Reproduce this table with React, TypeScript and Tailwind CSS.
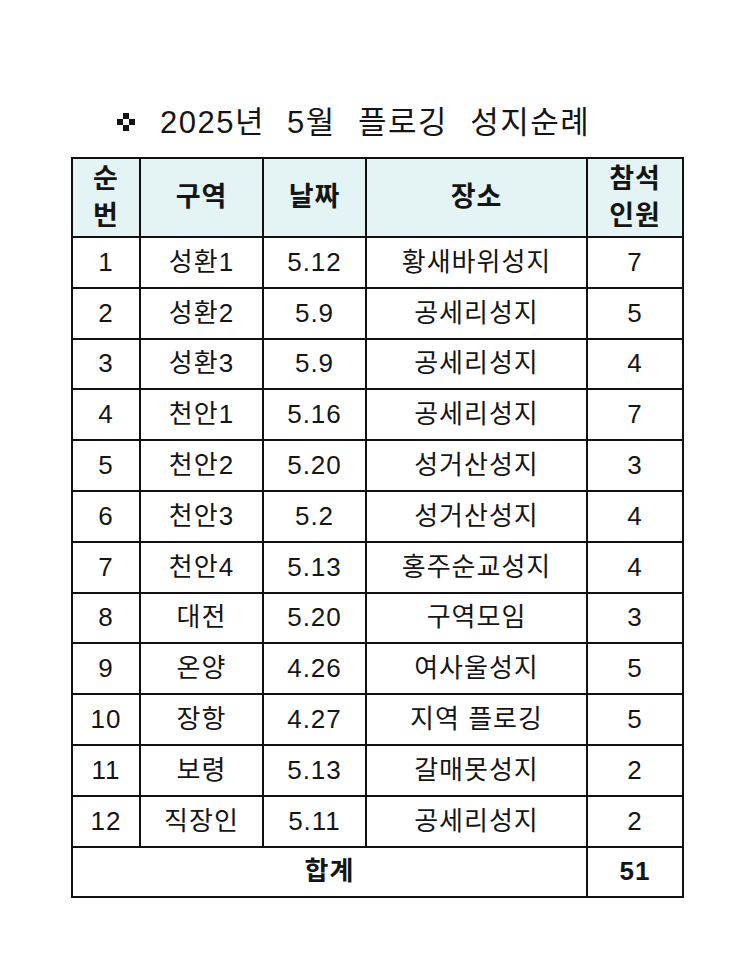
import React from "react";

const rows = [
  ["1", "성환1", "5.12", "황새바위성지", "7"],
  ["2", "성환2", "5.9", "공세리성지", "5"],
  ["3", "성환3", "5.9", "공세리성지", "4"],
  ["4", "천안1", "5.16", "공세리성지", "7"],
  ["5", "천안2", "5.20", "성거산성지", "3"],
  ["6", "천안3", "5.2", "성거산성지", "4"],
  ["7", "천안4", "5.13", "홍주순교성지", "4"],
  ["8", "대전", "5.20", "구역모임", "3"],
  ["9", "온양", "4.26", "여사울성지", "5"],
  ["10", "장항", "4.27", "지역 플로깅", "5"],
  ["11", "보령", "5.13", "갈매못성지", "2"],
  ["12", "직장인", "5.11", "공세리성지", "2"],
];

function Diamond() {
  return (
    <svg width="18" height="18" viewBox="0 0 18 18" className="shrink-0">
      <rect x="6" y="0" width="6" height="6" fill="#111" />
      <rect x="0" y="6" width="6" height="6" fill="#111" />
      <rect x="12" y="6" width="6" height="6" fill="#111" />
      <rect x="6" y="12" width="6" height="6" fill="#111" />
    </svg>
  );
}

export default function App() {
  const font = { fontFamily: '"Liberation Sans", "Noto Sans CJK KR", sans-serif' };
  const cell = "border-2 border-[#111] text-center p-0";

  return (
    <div className="w-[750px] h-[956px] bg-white text-[#151515]" style={font}>
      <div className="pt-[103px] pl-[117px] flex items-center h-[157px] pb-[16px] box-border">
        <Diamond />
        <h1 className="ml-[25px] text-[31px] leading-none font-normal tracking-[1.5px] [word-spacing:12px]">
          2025년 5월 플로깅 성지순례
        </h1>
      </div>

      <table className="ml-[71px] w-[611px] border-collapse table-fixed text-[26px] tracking-[1px]">
        <colgroup>
          <col className="w-[68px]" />
          <col className="w-[123px]" />
          <col className="w-[103px]" />
          <col className="w-[221px]" />
          <col className="w-[96px]" />
        </colgroup>
        <thead>
          <tr className="h-[79px] bg-[#e4f3f3] font-bold text-[27px]">
            <th className={cell}>
              <div className="leading-[37px]">순<br />번</div>
            </th>
            <th className={cell}>구역</th>
            <th className={cell}>날짜</th>
            <th className={cell}>장소</th>
            <th className={cell}>
              <div className="leading-[37px]">참석<br />인원</div>
            </th>
          </tr>
        </thead>
        <tbody>
          {rows.map((r) => (
            <tr key={r[0]} className="h-[50.8px]">
              {r.map((v, i) => (
                <td key={i} className={cell}>
                  {v}
                </td>
              ))}
            </tr>
          ))}
          <tr className="h-[50.8px] font-bold">
            <td colSpan={4} className={cell}>
              합계
            </td>
            <td className={cell}>51</td>
          </tr>
        </tbody>
      </table>
    </div>
  );
}
